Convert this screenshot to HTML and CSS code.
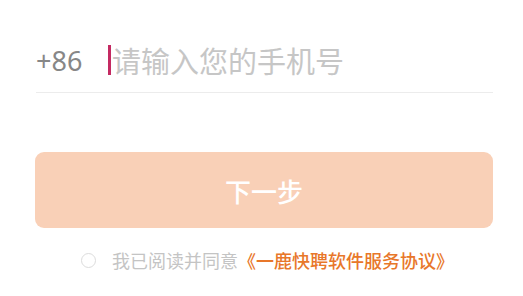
FILE: index.html
```html
<!DOCTYPE html>
<html lang="zh-CN">
<head>
<meta charset="utf-8">
<link rel="stylesheet" href="styles.css">
</head>
<body>
<div class="page">
  <div class="phone-row">
    <span class="code">+86</span>
    <span class="caret"></span>
    <span class="placeholder">请输入您的手机号</span>
  </div>
  <div class="next-btn">下一步</div>
  <div class="agree">
    <span class="radio"></span>
    <span class="agree-text">我已阅读并同意</span><span class="agree-link">《一鹿快聘软件服务协议》</span>
  </div>
</div>
</body>
</html>
```
FILE: styles.css
```css
html, body {
  margin: 0;
  padding: 0;
  background: #ffffff;
  font-family: "Noto Sans", "Noto Sans CJK SC", sans-serif;
}
.page {
  padding: 28px 30px 0 36px;
}
.phone-row {
  display: flex;
  align-items: center;
  height: 64px;
  border-bottom: 1px solid #ececec;
}
.code {
  font-size: 27px;
  color: #878787;
  width: 72px;
  line-height: 1;
}
.caret {
  width: 3px;
  height: 30px;
  background: #c42a62;
  margin-right: 1px;
}
.placeholder {
  font-family: "Noto Sans CJK SC", sans-serif;
  font-size: 29px;
  color: #c6c6c6;
  line-height: 1;
}
.next-btn {
  margin-top: 59px;
  margin-left: -1px;
  height: 76px;
  border-radius: 9px;
  background: #f9d0b7;
  color: #ffffff;
  font-family: "Noto Sans CJK SC", sans-serif;
  font-size: 26px;
  font-weight: 500;
  display: flex;
  align-items: center;
  justify-content: center;
}
.agree {
  display: flex;
  align-items: center;
  margin-top: 20px;
  padding-left: 45px;
  height: 24px;
  font-family: "Noto Sans CJK SC", sans-serif;
  font-size: 18px;
}
.radio {
  width: 13px;
  height: 13px;
  border: 1.5px solid #dcdcdc;
  border-radius: 50%;
  margin-right: 16px;
}
.agree-text {
  color: #c4c4c4;
}
.agree-link {
  color: #e8772a;
  font-weight: 500;
}
```
